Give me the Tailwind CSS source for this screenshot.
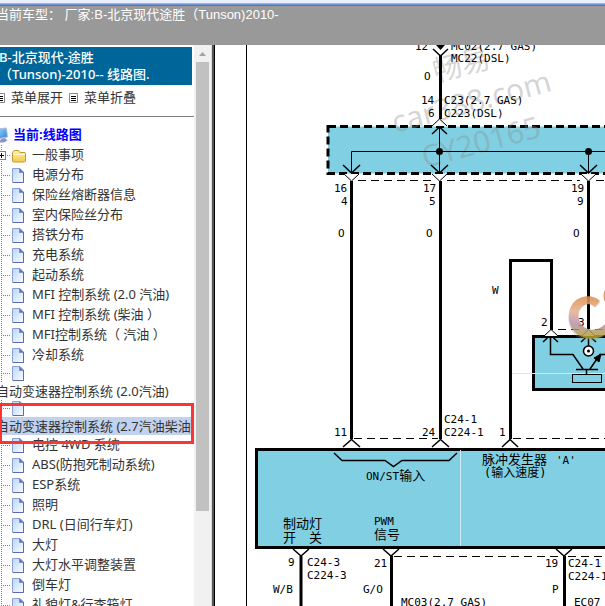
<!DOCTYPE html>
<html lang="zh-CN">
<head>
    <meta charset="UTF-8">
    <meta name="viewport" content="width=device-width, initial-scale=1.0">
    <title>线路图</title>
    <script src="https://cdn.jsdelivr.net/npm/@tailwindcss/browser@4"></script>
</head>
<body class="bg-white font-['Noto_Sans','Noto_Sans_CJK_SC',sans-serif] text-[13px] text-[#333]">
    <!-- shared tree icons -->
    <svg class="absolute h-0 w-0">
        <defs>
            <linearGradient id="paper" x1="0" y1="0" x2="1" y2="1">
                <stop offset="0" stop-color="#b9d6fb"/>
                <stop offset="1" stop-color="#fbfdff"/>
            </linearGradient>
            <linearGradient id="gold" x1="0" y1="0" x2="0" y2="1">
                <stop offset="0" stop-color="#fff3a0"/>
                <stop offset="1" stop-color="#f3c94a"/>
            </linearGradient>
            <linearGradient id="screen" x1="0" y1="0" x2="1" y2="1">
                <stop offset="0" stop-color="#9adcff"/>
                <stop offset="1" stop-color="#2d7fd8"/>
            </linearGradient>
            <linearGradient id="ring" x1="0" y1="0" x2="0" y2="1">
                <stop offset="0" stop-color="#dc8a4c"/>
                <stop offset=".35" stop-color="#e6b08c"/>
                <stop offset=".65" stop-color="#b48fae"/>
                <stop offset="1" stop-color="#b8a51c"/>
            </linearGradient>
        </defs>
        <symbol id="leaf" overflow="visible">
            <path d="M5.500 0V20M7 10.500H15" stroke="#808080" stroke-dasharray="1 1" fill="none"/>
            <path d="M16.500 3.500H24L27.500 7V17.500H16.500Z" fill="url(#paper)" stroke="#8ba0d4"/>
            <path d="M27.500 7V17.500H17" fill="none" stroke="#5a6cab"/>
            <path d="M23.500 3.500V7.500H27.500Z" fill="#5f78bd" stroke="#5f78bd" stroke-width=".6"/>
        </symbol>
        <symbol id="folder" overflow="visible">
            <path d="M5.500 0V20M11 10.500H15" stroke="#808080" stroke-dasharray="1 1" fill="none"/>
            <rect x="1.500" y="6.500" width="8" height="8" fill="#fff" stroke="#808080"/>
            <path d="M3 10.500H8M5.500 8V13" stroke="#000"/>
            <path d="M16.500 7.500L18 5.500H22.500L24 7.500H29L29.500 8.500V16L28.500 17H17.500L16.500 16Z" fill="url(#gold)" stroke="#c39a32"/>
            <path d="M17.500 9.500H28.500" stroke="#fffbe0"/>
        </symbol>
    </svg>

    <div class="flex h-screen flex-col overflow-hidden">
        <header class="shrink-0">
            <div class="h-[3px] bg-[#eaf0fb]"></div>
            <div class="h-[3px] bg-linear-to-b from-[#a9c0ea] to-[#3a66c4]"></div>
            <div class="h-[39px] bg-[#999] font-['Liberation_Sans','Noto_Sans_CJK_SC',sans-serif] leading-[17px] whitespace-nowrap text-white">
                <h1 class="-ml-1">当前车型： 厂家:B-北京现代途胜（Tunson)2010-</h1>
            </div>
        </header>

        <div class="flex min-h-0 flex-1">
            <aside class="w-[194px] shrink-0 overflow-hidden pt-[2px]">
                <h2 class="mr-[2px] h-[38px] bg-[#069] pt-[2px] leading-[17px] font-medium text-white"><span class="-ml-px block">B-北京现代-途胜<br>（Tunson)-2010-- 线路图.</span></h2>
                <nav class="-ml-1 flex h-8 items-center gap-[6px] border-b border-[#808080] pb-[6px]">
                    <svg class="h-[10px] w-[9px] shrink-0" viewBox="0 0 9 10"><path d="M.5.500H8.500V9.500H.500Z" fill="#fff" stroke="#888"/><path d="M2 3.500H7M2 5.500H7M2 7.500H7" stroke="#000"/></svg>
                    <a href="#">菜单展开</a>
                    <svg class="h-[10px] w-[9px] shrink-0" viewBox="0 0 9 10"><path d="M.5.500H8.500V9.500H.500Z" fill="#fff" stroke="#888"/><path d="M2 3.500H7M2 5.500H7M2 7.500H7" stroke="#000"/></svg>
                    <a href="#">菜单折叠</a>
                </nav>
                <div class="-ml-1 pt-2">
                    <div class="flex h-5 items-center gap-1">
                        <svg class="h-4 w-[13px] shrink-0" viewBox="0 0 13 16">
                            <path d="M0 2L10.500 1L11.500 10L2 12Z" fill="url(#screen)" stroke="#b4bfe0"/>
                            <path d="M5 12L9 11L11.500 13.500L8 15.500H3Z" fill="#8f93bd"/>
                        </svg>
                        <a href="#" class="font-bold text-[#00f]">当前:线路图</a>
                    </div>
                    <ul class="leading-[18px] whitespace-nowrap">
                        <li class="flex h-5 gap-1"><svg class="h-5 w-8 shrink-0"><use href="#folder"/></svg><a href="#">一般事项</a></li>
                        <li class="flex h-5 gap-1"><svg class="h-5 w-8 shrink-0"><use href="#leaf"/></svg><a href="#">电源分布</a></li>
                        <li class="flex h-5 gap-1"><svg class="h-5 w-8 shrink-0"><use href="#leaf"/></svg><a href="#">保险丝熔断器信息</a></li>
                        <li class="flex h-5 gap-1"><svg class="h-5 w-8 shrink-0"><use href="#leaf"/></svg><a href="#">室内保险丝分布</a></li>
                        <li class="flex h-5 gap-1"><svg class="h-5 w-8 shrink-0"><use href="#leaf"/></svg><a href="#">搭铁分布</a></li>
                        <li class="flex h-5 gap-1"><svg class="h-5 w-8 shrink-0"><use href="#leaf"/></svg><a href="#">充电系统</a></li>
                        <li class="flex h-5 gap-1"><svg class="h-5 w-8 shrink-0"><use href="#leaf"/></svg><a href="#">起动系统</a></li>
                        <li class="flex h-5 gap-1"><svg class="h-5 w-8 shrink-0"><use href="#leaf"/></svg><a href="#">MFI 控制系统 (2.0 汽油)</a></li>
                        <li class="flex h-5 gap-1"><svg class="h-5 w-8 shrink-0"><use href="#leaf"/></svg><a href="#">MFI 控制系统 (柴油 ）</a></li>
                        <li class="flex h-5 gap-1"><svg class="h-5 w-8 shrink-0"><use href="#leaf"/></svg><a href="#">MFI控制系统（ 汽油 ）</a></li>
                        <li class="flex h-5 gap-1"><svg class="h-5 w-8 shrink-0"><use href="#leaf"/></svg><a href="#">冷却系统</a></li>
                        <!-- names too long for the column drop under their icon -->
                        <li>
                            <svg class="h-[17px] w-8" viewBox="0 2 32 17"><use href="#leaf"/></svg>
                            <a href="#" class="block h-[18px]">自动变速器控制系统 (2.0汽油)</a>
                        </li>
                        <li class="relative">
                            <svg class="h-[17px] w-8" viewBox="0 2 32 17"><use href="#leaf"/></svg>
                            <a href="#" class="mr-[2px] block h-[18px] overflow-hidden bg-[#c1d2ee]">自动变速器控制系统 (2.7汽油柴油)</a>
                            <span class="absolute top-[3px] right-0 left-[3px] z-10 h-[41px] border-3 border-[#fb3434]"></span>
                        </li>
                        <li class="flex h-5 gap-1"><svg class="h-5 w-8 shrink-0"><use href="#leaf"/></svg><a href="#">电控 4WD 系统</a></li>
                        <li class="flex h-5 gap-1"><svg class="h-5 w-8 shrink-0"><use href="#leaf"/></svg><a href="#">ABS(防抱死制动系统)</a></li>
                        <li class="flex h-5 gap-1"><svg class="h-5 w-8 shrink-0"><use href="#leaf"/></svg><a href="#">ESP系统</a></li>
                        <li class="flex h-5 gap-1"><svg class="h-5 w-8 shrink-0"><use href="#leaf"/></svg><a href="#">照明</a></li>
                        <li class="flex h-5 gap-1"><svg class="h-5 w-8 shrink-0"><use href="#leaf"/></svg><a href="#">DRL (日间行车灯)</a></li>
                        <li class="flex h-5 gap-1"><svg class="h-5 w-8 shrink-0"><use href="#leaf"/></svg><a href="#">大灯</a></li>
                        <li class="flex h-5 gap-1"><svg class="h-5 w-8 shrink-0"><use href="#leaf"/></svg><a href="#">大灯水平调整装置</a></li>
                        <li class="flex h-5 gap-1"><svg class="h-5 w-8 shrink-0"><use href="#leaf"/></svg><a href="#">倒车灯</a></li>
                        <li class="flex h-5 gap-1"><svg class="h-5 w-8 shrink-0"><use href="#leaf"/></svg><a href="#">礼貌灯&amp;行李箱灯</a></li>
                    </ul>
                </div>
            </aside>

            <!-- scrollbar -->
            <div class="flex w-[17px] shrink-0 flex-col items-center bg-[#f1f1f1]">
                <svg class="h-[17px] w-[17px] shrink-0" viewBox="0 0 17 17"><path d="M5 11L8.500 7L12 11Z" fill="#a3a3a3"/></svg>
                <div class="h-4/5 w-[13px] bg-[#c1c1c1]"></div>
            </div>
            <div class="w-1 shrink-0 border-r border-l border-r-black border-l-[#ddd] bg-[#555]"></div>

            <main class="min-w-0 flex-1 overflow-hidden">
                <svg class="block max-w-none font-['DejaVu_Sans_Mono','Noto_Sans_CJK_SC',monospace] text-[11px]" width="640" height="760" viewBox="215 45 640 760" fill="none" stroke="#000">
                    <path d="M246.500 45V805"/>

                    <!-- filled modules -->
                    <rect x="328" y="126.500" width="460" height="47" fill="#80cfe2" stroke-width="3" stroke-dasharray="8 4"/>
                    <rect x="533.500" y="336.500" width="200" height="53" fill="#80cfe2" stroke-width="3"/>
                    <rect x="256.500" y="449.500" width="520" height="98" fill="#80cfe2" stroke-width="3"/>
                    <path d="M460.500 450V546M510 373.500H605" stroke="#cfeaf2"/>

                    <!-- watermark -->
                    <g class="font-['Noto_Sans','Noto_Sans_CJK_SC',sans-serif]" fill="#8f8f8f" fill-opacity=".38" stroke="none">
                        <text x="436" y="82" font-size="29" transform="rotate(-15 436 82)">畅易</text>
                        <text x="395" y="133" font-size="30" transform="rotate(-15 395 133)">car388.com</text>
                        <text x="425" y="168" font-size="30" transform="rotate(-15 425 168)">CY20165</text>
                    </g>

                    <!-- wires -->
                    <g stroke-width="3">
                        <path d="M440.500 55V119M351.500 181V439M440.500 181V439M588.500 181V329"/>
                        <path d="M510.500 439V260.500H551.500V330"/>
                        <path d="M301 556V805M391.500 556V805M564.500 556V805"/>
                    </g>
                    <path d="M351.500 172V151.500H788M439.500 128V172M588.500 151V172"/>
                    <g fill="#000" stroke="none">
                        <circle cx="439.500" cy="151.500" r="3.500"/>
                        <circle cx="588.500" cy="151.500" r="3.500"/>
                        <path d="M436 45H445L440.500 50Z"/>
                    </g>

                    <!-- connector arrows -->
                    <g stroke-width="1.500">
                        <path d="M432 134L439.500 127L447 134M343 165L351.500 173L360 165M431 165L439.500 173L448 165M580 165L588.500 173L597 165"/>
                        <path d="M543 342L550.500 335L558 342M581 342L588.500 335L596 342"/>
                    </g>
                    <g fill="#fff">
                        <path d="M432 126L439.500 119L447 126"/>
                        <path d="M344 174L351.500 181L359 174M432 174L439.500 181L447 174M581 174L588.500 181L596 174"/>
                        <path d="M544 336L551 329.500L558 336M582 336L588.500 329.500L595 336"/>
                    </g>
                    <path d="M433 49L440.500 56L448 49" stroke-width="1.500"/>
                    <path d="M343 447L351.500 439.500L360 447M432 447L440.500 439.500L449 447M502 447L510 439.500L518 447" stroke-width="1.500"/>
                    <path d="M293 549L301 556L309 549M383 549L391 556L399 549M556 549L564 556L572 549" stroke-width="1.500"/>

                    <!-- dashed connector links -->
                    <path stroke-dasharray="8 5" d="M358 180.500H432M447 180.500H580M596 180.500H788M558 329.500H582M595 329.500H730M354 438.500H438M513 438.500H770M394 556.500H562M568 556.500H770"/>

                    <!-- speed sensor -->
                    <path d="M550.500 337V354.500H573L583 369M576 369.500H598M590 369L600 354.500H730M586.500 369V374M588.500 337V347" stroke-width="1.500"/>
                    <path d="M601 354L599 362L594 358Z" fill="#000"/>
                    <rect x="572.500" y="374.500" width="29" height="8"/>
                    <circle cx="588.500" cy="351" r="5" fill="#fff" stroke-width="1.500"/>
                    <circle cx="588.500" cy="351" r="1.500" fill="#000" stroke="none"/>

                    <!-- input brace -->
                    <path d="M334 453L342 460.500H385L393.500 466.500L402 460.500H449L457 453" stroke-width="1.500"/>

                    <g fill="#000" stroke="none">
                        <text x="415" y="50">12</text>
                        <text x="451" y="50">MC02(2.7 GAS)</text>
                        <text x="451" y="62">MC22(DSL)</text>
                        <text x="424" y="80">O</text>
                        <text x="421" y="104">14</text>
                        <text x="428" y="117">6</text>
                        <text x="444" y="104">C23(2.7 GAS)</text>
                        <text x="444" y="117">C223(DSL)</text>

                        <text x="334" y="192">16</text>
                        <text x="341" y="205">4</text>
                        <text x="338" y="237">O</text>
                        <text x="423" y="192">17</text>
                        <text x="429" y="205">5</text>
                        <text x="426" y="237">O</text>
                        <text x="571" y="192">19</text>
                        <text x="577" y="205">9</text>
                        <text x="573" y="237">O</text>

                        <text x="492" y="294">W</text>
                        <text x="541" y="326">2</text>
                        <text x="578" y="326">3</text>

                        <text x="334" y="436">11</text>
                        <text x="422" y="436">24</text>
                        <text x="444" y="423">C24-1</text>
                        <text x="444" y="436">C224-1</text>
                        <text x="499" y="436">1</text>

                        <text x="366" y="480">ON/ST<tspan font-size="13">输入</tspan></text>
                        <text x="482" y="464" font-size="13">脉冲发生器</text>
                        <text x="556" y="464">'A'</text>
                        <text x="484" y="477" font-size="12">(输入速度)</text>
                        <text x="283" y="528" font-size="13">制动灯</text>
                        <text x="283" y="542" font-size="13">开　关</text>
                        <text x="374" y="525">PWM</text>
                        <text x="374" y="539" font-size="13">信号</text>

                        <text x="288" y="566">9</text>
                        <text x="307" y="566">C24-3</text>
                        <text x="307" y="579">C224-3</text>
                        <text x="273" y="593">W/B</text>
                        <text x="374" y="567">21</text>
                        <text x="363" y="593">G/O</text>
                        <text x="401" y="606">MC03(2.7 GAS)</text>
                        <text x="545" y="567">19</text>
                        <text x="568" y="567">C24-1</text>
                        <text x="568" y="580">C224-1</text>
                        <text x="552" y="593">P</text>
                        <text x="574" y="606">EC07</text>
                    </g>

                    <!-- logo mark over the sensor, a shaded ring open to the right -->
                    <g opacity=".85" stroke="none">
                        <path d="M600 303C594 295 580 295 573 304C566 313 567 328 576 336C585 343 598 342 606 335V323C601 331 590 334 583 329C575 323 576 313 581 308C586 303 591 304 595 308Z" fill="#999" fill-opacity=".35"/>
                        <path d="M600 301C593 294 580 295 573 303C566 313 568 327 577 334C586 341 598 340 607 333V322C601 330 591 332 584 327C577 321 577 312 582 307C586 303 591 303 595 307Z" fill="url(#ring)"/>
                        <path d="M608 287C603 290 602 298 606 303V287Z" fill="#d98a3c"/>
                    </g>
                </svg>
            </main>
        </div>
    </div>
</body>
</html>
